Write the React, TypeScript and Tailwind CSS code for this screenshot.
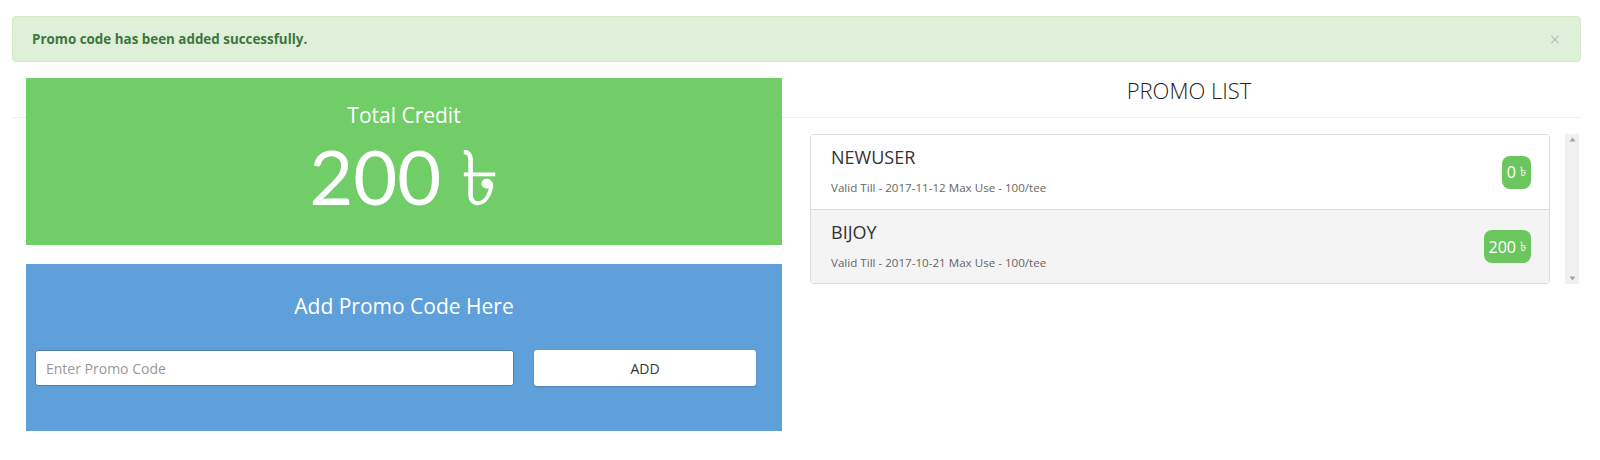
import React from "react";

const promos = [
  { code: "NEWUSER", valid: "Valid Till - 2017-11-12 Max Use - 100/tee", amount: "0", bg: "bg-white" },
  { code: "BIJOY", valid: "Valid Till - 2017-10-21 Max Use - 100/tee", amount: "200", bg: "bg-[#f4f4f4]" },
];

export default function App() {
  return (
    <div className="w-[1600px] h-[460px] bg-white font-['Open_Sans','Lato',sans-serif]">
      <div className="pt-4 pl-3 pr-[19px]">
        <div className="h-[46px] flex items-center justify-between rounded-[4px] border border-[#d6e9c6] bg-[#dff0d8] pl-[19px] pr-[20px]">
          <span className="text-[13.4px] font-bold text-[#3c763d]">Promo code has been added successfully.</span>
          <span className="text-[18px] leading-none text-[#9fb59a] font-light">×</span>
        </div>

        <div className="relative mt-4 flex">
          <div className="absolute left-0 right-0 top-[39px] h-px bg-[#eeeeee]" />
          <div className="relative z-10 w-[785px] pl-[14px] pr-[15px]">
            <div className="h-[167px] bg-[#71cd68] flex flex-col items-center text-white">
              <div className="mt-[22px] text-[21px] leading-[30px]">Total Credit</div>
              <div className="mt-[6px] text-[76px] leading-[80px] font-['Lato',sans-serif]">200 ৳</div>
            </div>
            <div className="mt-[19px] h-[167px] bg-[#5fa0da] flex flex-col">
              <div className="mt-[27px] text-center text-white text-[21px] leading-[30px]">Add Promo Code Here</div>
              <div className="mt-[29px] flex pl-[9px] pr-[26px] gap-[20px]">
                <input
                  placeholder="Enter Promo Code"
                  className="w-[479px] h-[36px] rounded-[3px] border border-[#4f7fae] bg-white px-[10px] text-[14px] text-[#333] placeholder:text-[#999] outline-none"
                />
                <button className="flex-1 h-[36px] rounded-[3px] bg-white text-[14px] text-[#333] shadow-[0_1px_2px_rgba(0,0,0,0.2)]">
                  ADD
                </button>
              </div>
            </div>
          </div>

          <div className="flex-1">
            <div className="h-[39px] pb-[14px] flex items-center justify-center text-[22px] text-[#222] font-light">PROMO LIST</div>
            <div className="mt-[17px] flex pl-[13px] pr-[2px]">
              <div className="w-[740px] rounded-[4px] border border-[#dddddd] overflow-hidden">
                {promos.map((p, i) => (
                  <div
                    key={p.code}
                    className={`${p.bg} h-[74px] flex items-center justify-between pl-[20px] pr-[18px] ${i > 0 ? "border-t border-[#dddddd]" : ""}`}
                  >
                    <div className="flex flex-col self-start pt-[10px]">
                      <span className="text-[18px] leading-[24px] text-[#333]">{p.code}</span>
                      <span className="mt-[12px] text-[11.6px] leading-[14px] text-[#666]">{p.valid}</span>
                    </div>
                    <span className="rounded-[8px] bg-[#6cc660] px-[5px] h-[33px] flex items-center text-[16px] text-white">
                      {p.amount} <span className="ml-[4px] text-[13px]">৳</span>
                    </span>
                  </div>
                ))}
              </div>
              <div className="ml-[15px] w-[14px] bg-[#f1f1f1] flex flex-col justify-between items-center py-[3px]">
                <svg width="7" height="5" viewBox="0 0 7 5"><path d="M3.5 0.5L6.5 4.5H0.5Z" fill="#a3a3a3" /></svg>
                <svg width="7" height="5" viewBox="0 0 7 5"><path d="M3.5 4.5L6.5 0.5H0.5Z" fill="#a3a3a3" /></svg>
              </div>
            </div>
          </div>
        </div>
      </div>
    </div>
  );
}
